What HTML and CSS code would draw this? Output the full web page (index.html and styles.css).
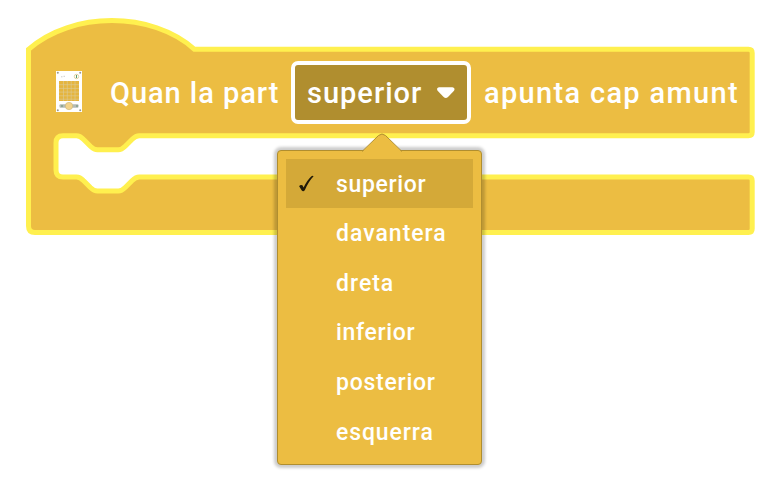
FILE: index.html
```
<!DOCTYPE html>
<html lang="ca">
<head>
<meta charset="utf-8">
<title>Quan la part superior apunta cap amunt</title>
<link rel="stylesheet" href="styles.css">
</head>
<body>
<main class="workspace">
  <svg class="block-shape" viewBox="0 0 776 494" aria-hidden="true">
    <path d="M28.5 49.3c43.5-38.3 123.5-38.3 166 0H748.5q3.7 0 3.7 3.7v79q0 3.7-3.7 3.7H139.2c-3.5 0-5.2 1.7-7 3.5l-7 7c-1.7 1.7-3.5 3.5-6.9 3.5H97.4c-3.5 0-5.2-1.8-7-3.5l-7-7c-1.7-1.8-3.5-3.5-6.9-3.5H63q-7 0-7 7v27.3q0 7 7 7h13.5c3.4 0 5.2 1.7 6.9 3.5l7 7c1.8 1.7 3.5 3.5 7 3.5h20.9c3.4 0 5.2-1.8 6.9-3.5l7-7c1.8-1.8 3.5-3.5 7-3.5H748.5q3.7 0 3.7 3.7v48.1q0 3.7-3.7 3.7H35q-6.5 0-6.5-6.5Z"/>
  </svg>
  <div class="block-row">
    <svg class="board-icon" viewBox="0 0 26 41" aria-hidden="true">
      <path fill="#fff" d="M0 0h26v41H0z"/>
      <g fill="#999b91"><circle cx="1.8" cy="1.8" r="1"/><circle cx="24.2" cy="1.8" r="1"/><circle cx="1.8" cy="39.2" r="1"/><circle cx="24.2" cy="39.2" r="1"/></g>
      <path stroke="#ccc" d="M5 5.8h1.5M7.5 5.3H9"/>
      <circle cx="20.5" cy="5.5" r="2.2" fill="#fff" stroke="#d8c689" stroke-width=".8"/>
      <path stroke="#5b9b6c" d="M20.5 4v3"/>
      <path fill="#e5b53f" d="M3 10h20v20H3z"/>
      <path stroke="#dccb98" stroke-width=".6" d="M7.5 10v20M11.3 10v20M15.2 10v20M19 10v20M3 13.7h20M3 17.4h20M3 21.1h20M3 24.8h20M3 28.2h20"/>
      <rect x="3.5" y="33.3" width="19" height="3.5" rx="1" fill="#b5bbb5"/>
      <path stroke="#6b9275" stroke-width="1.2" d="M5 35h2M20 35h2"/>
      <circle cx="13" cy="35" r="3.7" fill="#f3d38c" stroke="#c9b57b" stroke-width=".6"/>
    </svg>
    <span class="label label-start">Quan la part</span>
    <button class="field" type="button"><span class="field-text">superior</span>
      <svg class="caret" viewBox="0 0 20 14" aria-hidden="true"><path d="M3 1.2h13.4q3.2.8 1.6 3.5L12 11q-2.2 2.2-4.4 0L1.6 4.7Q0 2 3 1.2Z"/></svg>
    </button>
    <span class="label label-end">apunta cap amunt</span>
  </div>
  <div class="menu" role="listbox">
    <svg class="menu-arrow" viewBox="0 0 42 20" aria-hidden="true"><path class="arrow-fill" d="M0 20 L17.5 2.5Q21 -.5 24.5 2.5L42 20Z"/><path class="arrow-line" d="M1 18.5 L17.5 2.5Q21 -.5 24.5 2.5L41 18.5"/></svg>
    <div class="item selected" role="option" aria-selected="true"><svg class="check" viewBox="0 0 18 18" aria-hidden="true"><path d="M1.2 11.3q1.3-2 3.5-.9l1.2 2.2Q10.2 4.3 14.2.8q1.5-.8 2.3-.1Q11.3 6 7.3 15.3q-1.5 2.1-3.3.7Z"/></svg><span class="superior">superior</span></div>
    <div class="item" role="option"><span class="davantera">davantera</span></div>
    <div class="item" role="option"><span class="dreta">dreta</span></div>
    <div class="item" role="option"><span class="inferior">inferior</span></div>
    <div class="item" role="option"><span class="posterior">posterior</span></div>
    <div class="item" role="option"><span class="esquerra">esquerra</span></div>
  </div>
</main>
</body>
</html>
```
FILE: styles.css
```
* { box-sizing: border-box; }
body { margin: 0; background: #fff; font-family: Roboto, "Liberation Sans", sans-serif; color: #fff; }
.workspace { position: relative; width: 776px; height: 494px; padding-top: 61px; overflow: hidden; }
.block-shape { position: absolute; inset: 0; width: 776px; height: 494px; }
.block-shape path { fill: #ecbd42; stroke: #fff04f; stroke-width: 5; }
.block-row { position: relative; display: flex; align-items: center; height: 63px; padding-left: 56px; white-space: nowrap; }
.board-icon { width: 26px; height: 41px; flex: none; margin-top: -2px; }
.label, .field-text { font-size: 29px; font-weight: 500; line-height: 34px; }
.label-start { width: 181px; margin-left: 28px; letter-spacing: .95px; }
.label-end { margin-left: 13px; letter-spacing: 1.32px; }
.field { display: flex; align-items: center; width: 180px; height: 63px; padding: 0 0 0 12px; background: #b08e2f; border: 4px solid #fff; border-radius: 7px; color: #fff; font-family: inherit; }
.field-text { width: 129px; text-align: left; letter-spacing: 1px; }
.caret { width: 20px; height: 14px; fill: #fff; }
.menu { position: absolute; left: 277px; top: 150px; width: 205px; height: 315px; padding: 8px; background: #ecbd42; border: 1px solid #b08e2f; border-radius: 4px; box-shadow: 0 0 3px 3px rgba(0,0,0,.2); }
.menu-arrow { position: absolute; left: 83px; top: -18px; width: 42px; height: 20px; }
.arrow-fill { fill: #ecbd42; }
.arrow-line { fill: none; stroke: #b08e2f; stroke-width: 1; }
.item { position: relative; display: flex; align-items: center; height: 49.6px; padding: 2px 0 0 50px; font-size: 23px; font-weight: 500; }
.selected { background: #d4a938; height: 49px; }
.superior { letter-spacing: .65px; }
.davantera { letter-spacing: 1px; }
.dreta { letter-spacing: 1px; }
.inferior { letter-spacing: .65px; }
.posterior { letter-spacing: .75px; }
.esquerra { letter-spacing: .9px; }
.check { position: absolute; left: 12px; top: 16px; width: 17px; height: 18px; fill: #211a09; }
```
